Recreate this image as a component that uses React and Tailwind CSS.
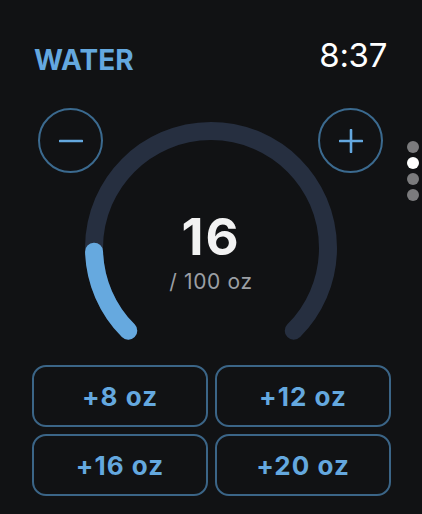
import { useState } from 'react';

const AMOUNTS = [8, 12, 16, 20];
const GOAL = 100;

// 270° gauge, r=117, center (127,127)
const R = 117;
const C = 127;
const START = 135;
const SWEEP = 270;

const pointAt = (deg) => {
  const rad = (deg * Math.PI) / 180;
  return [C + R * Math.cos(rad), C + R * Math.sin(rad)];
};

const arcPath = (from, to) => {
  const [x1, y1] = pointAt(from);
  const [x2, y2] = pointAt(to);
  const large = to - from > 180 ? 1 : 0;
  return `M ${x1} ${y1} A ${R} ${R} 0 ${large} 1 ${x2} ${y2}`;
};

const Gauge = ({ value }) => {
  const pct = Math.min(value / GOAL, 1);
  return (
    <svg width="254" height="222" viewBox="0 0 254 222" fill="none">
      <path d={arcPath(START, START + SWEEP)} stroke="#262f40" strokeWidth="18" strokeLinecap="round" />
      {pct > 0 && (
        <path d={arcPath(START, START + SWEEP * pct)} stroke="#66a9df" strokeWidth="18" strokeLinecap="round" />
      )}
    </svg>
  );
};

const RoundButton = ({ children, className, onClick }) => (
  <button
    onClick={onClick}
    className={`absolute top-0 w-[65px] h-[65px] rounded-full border-2 border-[#3b6a8f] flex items-center justify-center ${className}`}
  >
    {children}
  </button>
);

export default function App() {
  const [oz, setOz] = useState(16);

  return (
    <div className="relative w-[422px] h-[514px] bg-[#111214] overflow-hidden font-['Inter','Noto_Sans',sans-serif]">
      {/* Header */}
      <div className="flex justify-between items-start pt-[39px] pl-[34px] pr-[35px]">
        <span className="mt-[7px] text-[28px] leading-none font-bold text-[#64a8df]">WATER</span>
        <span className="text-[33px] leading-none text-white tracking-[-0.01em]">8:37</span>
      </div>

      {/* Gauge */}
      <div className="relative mt-[34px] h-[257px]">
        <RoundButton className="left-[38px]" onClick={() => setOz(Math.max(0, oz - 1))}>
          <svg width="24" height="24" viewBox="0 0 24 24">
            <path d="M1 12h22" stroke="#64a8df" strokeWidth="2.6" strokeLinecap="round" />
          </svg>
        </RoundButton>
        <RoundButton className="right-[39px]" onClick={() => setOz(oz + 1)}>
          <svg width="24" height="24" viewBox="0 0 24 24">
            <path d="M1 12h22M12 1v22" stroke="#64a8df" strokeWidth="2.6" strokeLinecap="round" />
          </svg>
        </RoundButton>
        <div className="flex justify-center pt-[13px]">
          <div className="relative">
            <Gauge value={oz} />
            <div className="absolute inset-x-0 top-[90px] flex flex-col items-center">
              <span className="text-[51px] leading-none font-bold text-[#f2f2f2] tracking-[0.04em]">{oz}</span>
              <span className="mt-[9px] text-[21px] leading-none text-[#9b9fa4] tracking-[0.03em]">/ {GOAL} oz</span>
            </div>
          </div>
        </div>
      </div>

      {/* Quick add */}
      <div className="grid grid-cols-2 gap-[7px] pl-[32px] pr-[31px]">
        {AMOUNTS.map((a) => (
          <button
            key={a}
            onClick={() => setOz(oz + a)}
            className="h-[62px] rounded-[14px] border-2 border-[#3b6587] flex items-center justify-center text-[26px] font-bold text-[#64a8df] tracking-[0.04em]"
          >
            +{a} oz
          </button>
        ))}
      </div>

      {/* Page dots */}
      <div className="absolute left-[407px] top-[141px] flex flex-col gap-[4px]">
        {[0, 1, 2, 3].map((i) => (
          <span key={i} className={`w-[12px] h-[12px] rounded-full ${i === 1 ? 'bg-white' : 'bg-[#7b7b7d]'}`} />
        ))}
      </div>
    </div>
  );
}
